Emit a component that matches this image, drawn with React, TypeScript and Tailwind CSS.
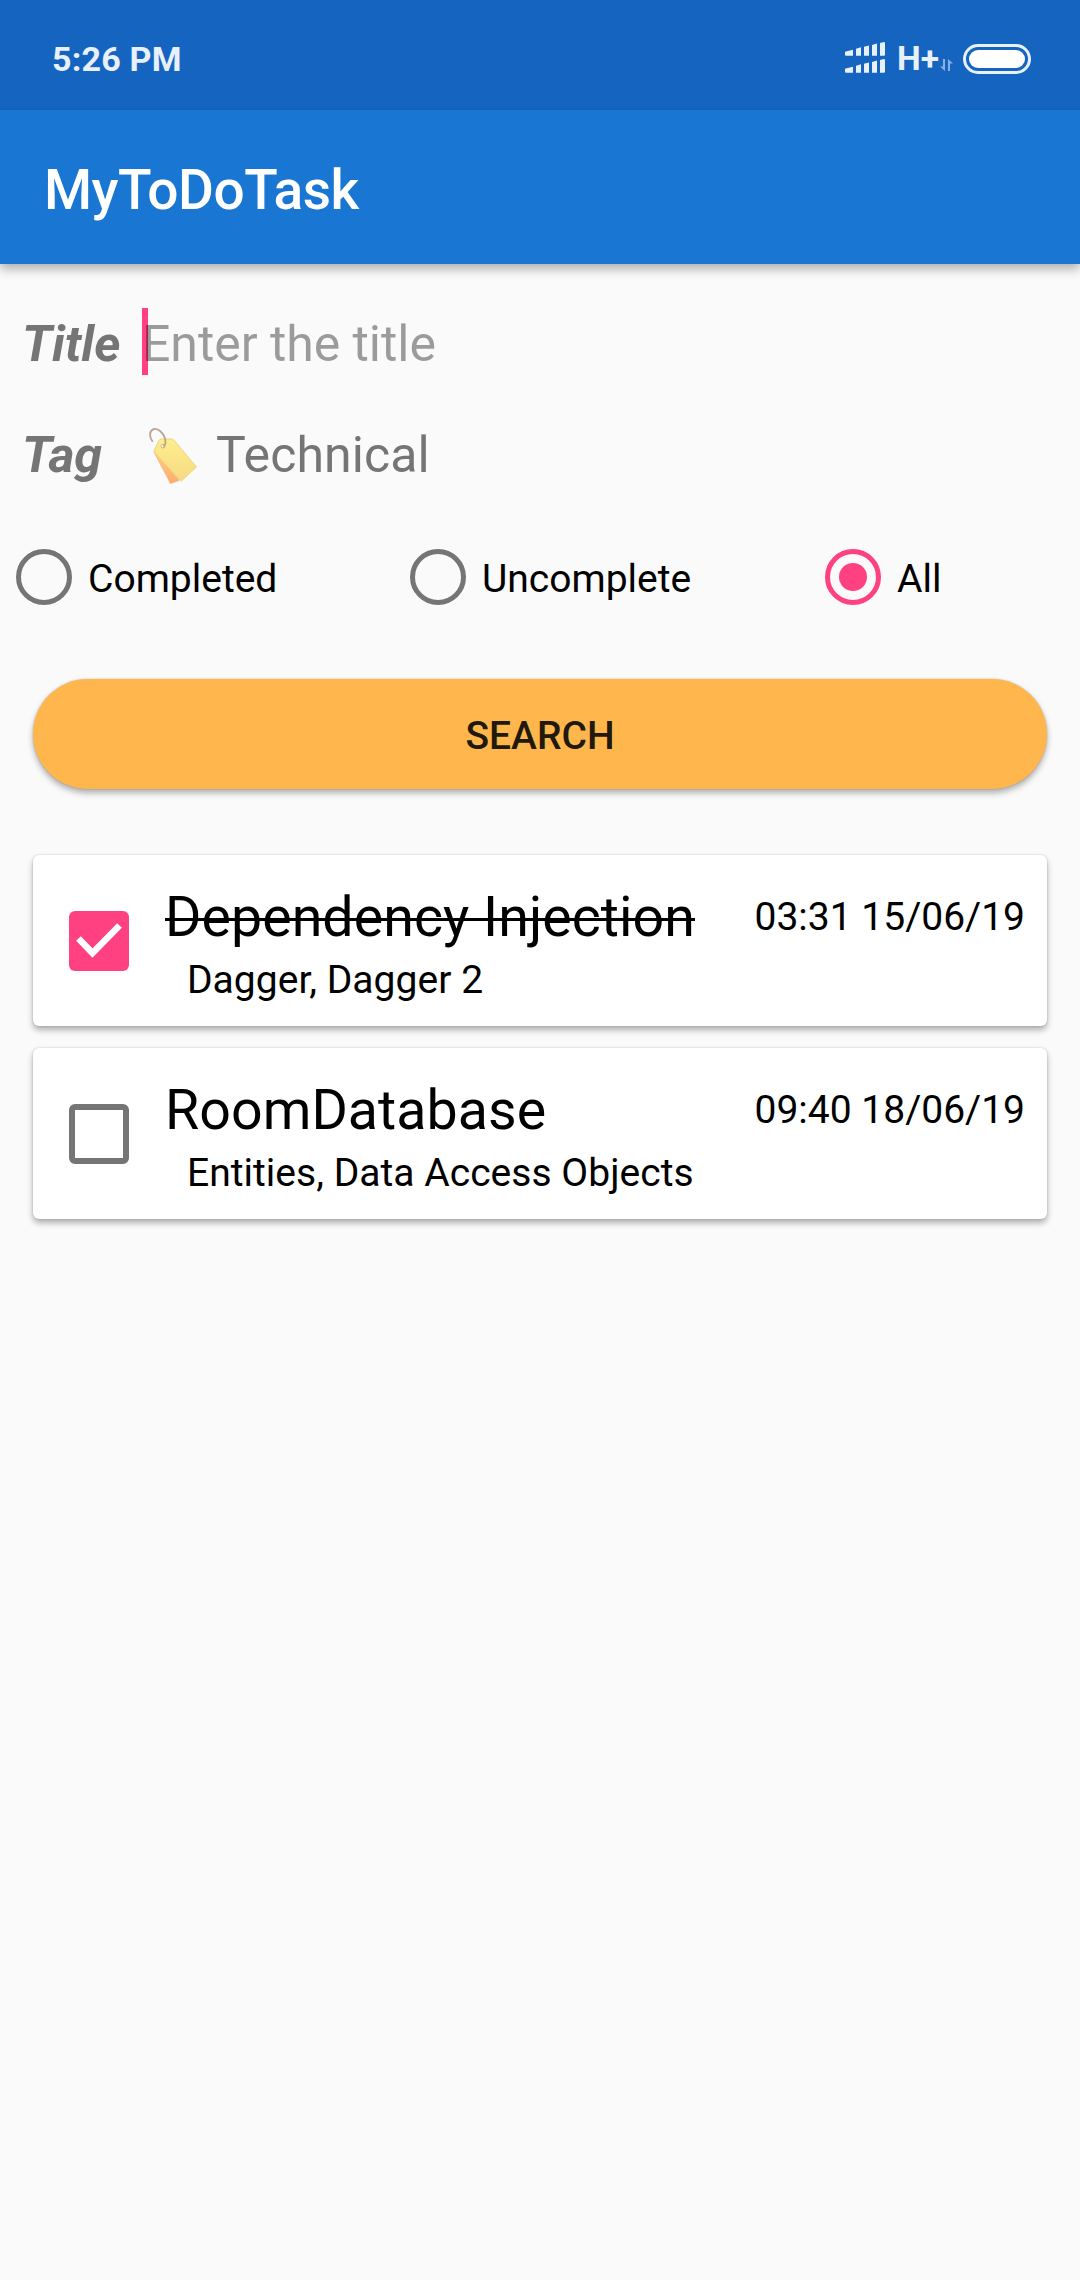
import React, { useState } from "react";

const TASKS = [
  { title: "Dependency Injection", tags: "Dagger, Dagger 2", date: "03:31 15/06/19", done: true },
  { title: "RoomDatabase", tags: "Entities, Data Access Objects", date: "09:40 18/06/19", done: false },
];

function SignalIcon() {
  return (
    <svg width="40" height="31" viewBox="0 0 40 31" fill="#e8f0fa">
      <path d="M0 10.5a1 1 0 0 1 .7-1L8 7.7v6.1H1a1 1 0 0 1-1-1zM11 6.700l5-1.400v8.500h-5zM19 4.800l5-1.400v10.400h-5zM27 2.900l5-1.500v12.400h-5zM35 1l4-1a1 1 0 0 1 1 1v11.800a1 1 0 0 1-1 1h-4z" />
      <path d="M0 27.500a1 1 0 0 1 .7-1L8 24.700v6.100H1a1 1 0 0 1-1-1zM11 23.700l5-1.400v8.500h-5zM19 21.800l5-1.400v10.400h-5zM27 19.900l5-1.500v12.400h-5zM35 18l4-1a1 1 0 0 1 1 1v11.800a1 1 0 0 1-1 1h-4z" />
    </svg>
  );
}

function DataArrows() {
  return (
    <svg width="13" height="12" viewBox="0 0 13 12" fill="#fff" fillOpacity="0.5">
      <path d="M3 0h2v12L0 7.500h3zM8 12h2V4.500h3L8 0z" />
    </svg>
  );
}

function TagIcon() {
  return (
    <svg className="mt-0.5" width="50" height="58" viewBox="0 0 50 58">
      <defs>
        <linearGradient id="tagFront" x1="0" y1="0" x2="0" y2="1">
          <stop offset="0" stopColor="#fdee8c" />
          <stop offset="1" stopColor="#f7d983" />
        </linearGradient>
        <linearGradient id="tagBack" x1="0" y1="0" x2="0" y2="1">
          <stop offset="0" stopColor="#ffcf80" />
          <stop offset="1" stopColor="#ffab6e" />
        </linearGradient>
      </defs>
      <path d="M6 25 22.500 56.500 31 53.500 20 30z" fill="url(#tagBack)" stroke="#f3b27c" strokeWidth="0.800" strokeLinejoin="round" />
      <path
        d="M5.800 24.500 11 13.500Q11.800 12 13.500 12L23.500 12Q25 12 26 13.200L48.500 40 33 54.300z"
        fill="url(#tagFront)"
        stroke="#ecd582"
        strokeWidth="1"
        strokeLinejoin="round"
      />
      <circle cx="15" cy="19.300" r="2.300" fill="#d9b878" />
      <path d="M4.700 14.700C1 10 1 4 5.500 2.200 10 .8 15.500 6 17 11.500c1 4 .5 7.500-2 8" fill="none" stroke="#bba48f" strokeWidth="1.800" />
      <circle cx="14.500" cy="19.300" r="1" fill="#fff" />
    </svg>
  );
}

function Radio({ label, checked, onSelect }: { label: string; checked: boolean; onSelect: () => void }) {
  return (
    <button onClick={onSelect} className="flex items-center gap-4">
      <span
        className={
          checked
            ? "flex size-[56px] items-center justify-center rounded-full border-[5.5px] border-[#ff4081]"
            : "flex size-[56px] items-center justify-center rounded-full border-[5.5px] border-[#757575]"
        }
      >
        {checked && <span className="size-7 rounded-full bg-[#ff4081]" />}
      </span>
      <span className="pt-1 text-[39px] leading-[45px] text-black">{label}</span>
    </button>
  );
}

function CheckBox({ checked }: { checked: boolean }) {
  return checked ? (
    <span className="flex size-[60px] rounded-md bg-[#ff4081]">
      <svg width="60" height="60" viewBox="0 0 60 60" fill="none" stroke="#fff" strokeWidth="6.500">
        <path d="M9.500 27.500 23.500 42 50.500 14.500" />
      </svg>
    </span>
  ) : (
    <span className="block size-[60px] rounded-md border-[6.5px] border-[#757575]" />
  );
}

export default function App() {
  const [filter, setFilter] = useState("All");
  return (
    <div className="flex h-[2280px] w-[1080px] flex-col bg-[#fafafa] font-[Roboto,sans-serif]">
      <div className="flex h-[110px] items-center justify-between bg-[#1565c0] pt-2 pr-[49px] pl-[52px]">
        <span className="text-[34px] leading-10 font-bold tracking-[0.2px] text-[#e8f0fa]">5:26 PM</span>
        <div className="flex items-center">
          <span className="-mt-1">
            <SignalIcon />
          </span>
          <span className="ml-3 text-[33.5px] leading-10 font-bold text-[#e8f0fa]">H+</span>
          <span className="mt-3 ml-px">
            <DataArrows />
          </span>
          <span className="ml-2.5 flex h-[30px] w-[68px] items-center justify-center rounded-full border-3 border-[#e8f0fa]">
            <span className="h-[18px] w-14 rounded-full bg-white" />
          </span>
        </div>
      </div>
      <header className="flex h-[154px] items-center bg-[#1976d2] pt-1.5 pl-11 shadow-[0_5px_10px_rgba(0,0,0,0.3)]">
        <h1 className="text-[55px] leading-16 font-medium tracking-[-0.5px] text-white">MyToDoTask</h1>
      </header>

      <div className="mt-6 flex h-[111px] items-center pl-[22px] text-[50px] leading-[60px]">
        <span className="w-[120px] font-bold text-[#757575] italic">Title</span>
        <span className="-mt-[5px] flex h-[67px] items-center border-l-6 border-[#ff4081]">
          <span className="mt-[5px] -ml-1.5 tracking-[-0.05px] text-black/38">Enter the title</span>
        </span>
      </div>
      <div className="flex h-[111px] items-center pl-[22px] text-[50px] leading-[60px] text-[#757575]">
        <span className="w-[126px] font-bold italic">Tag</span>
        <TagIcon />
        <span className="ml-[18px] tracking-[0.1px]">Technical</span>
      </div>

      <div className="mt-[39px] flex h-[56px] pl-4">
        <div className="w-[394px]">
          <Radio label="Completed" checked={filter === "Completed"} onSelect={() => setFilter("Completed")} />
        </div>
        <div className="w-[415px]">
          <Radio label="Uncomplete" checked={filter === "Uncomplete"} onSelect={() => setFilter("Uncomplete")} />
        </div>
        <Radio label="All" checked={filter === "All"} onSelect={() => setFilter("All")} />
      </div>

      <button className="mx-[33px] mt-[74px] flex h-[110px] shrink-0 items-center justify-center rounded-full bg-[#ffb74d] pt-1 text-[39px] font-medium text-[#211a0c] shadow-[0_4px_6px_rgba(0,0,0,0.3),0_0_2px_rgba(0,0,0,0.2)]">
        SEARCH
      </button>

      <div className="mx-[33px] mt-[66px] flex flex-col gap-[22px]">
        {TASKS.map((task) => (
          <div
            key={task.title}
            className="flex h-[171px] rounded-[6px] bg-white pr-[22px] pl-9 text-black shadow-[0_4px_6px_rgba(0,0,0,0.3),0_0_2px_rgba(0,0,0,0.2)]"
          >
            <div className="w-24 pt-14">
              <CheckBox checked={task.done} />
            </div>
            <div className="flex-1 pt-[31px]">
              <div className="flex items-center justify-between">
                <span
                  className={
                    task.done
                      ? "text-[55.5px] leading-16 tracking-[0.05px] line-through decoration-3"
                      : "text-[55.5px] leading-16 tracking-[0.05px]"
                  }
                >
                  {task.title}
                </span>
                <span className="-mt-0.5 text-[39px] leading-[45px]">{task.date}</span>
              </div>
              <div className="mt-2 pl-[22px] text-[39px] leading-[45px] tracking-[0.03px]">{task.tags}</div>
            </div>
          </div>
        ))}
      </div>
    </div>
  );
}
